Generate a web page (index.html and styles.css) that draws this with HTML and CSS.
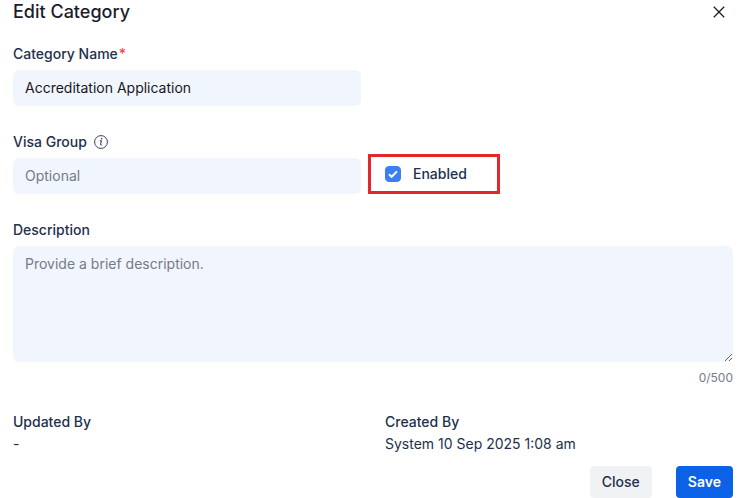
FILE: index.html
```html
<!DOCTYPE html>
<html lang="en">
<head>
    <meta charset="UTF-8">
    <meta name="viewport" content="width=device-width, initial-scale=1.0">
    <title>Edit Category</title>
    <link rel="stylesheet" href="styles.css">
</head>
<body>
    <form class="dialog">
        <div class="header">
            <h1>Edit Category</h1>
            <button type="button" class="close_icon" aria-label="Close dialog">
                <svg width="12" height="12" viewBox="0 0 12 12" fill="none" stroke="currentColor" stroke-width="1.3">
                    <path d="M0.8 0.8L11.2 11.2M11.2 0.8L0.8 11.2" />
                </svg>
            </button>
        </div>

        <div class="row">
            <div class="field">
                <label for="categoryName">Category Name<span class="required">*</span></label>
                <input id="categoryName" class="text_input" type="text" value="Accreditation Application">
            </div>
        </div>

        <div class="row">
            <div class="field">
                <label for="visaGroup">Visa Group
                    <svg class="info" width="14" height="14" viewBox="0 0 14 14" fill="none" stroke="currentColor">
                        <circle cx="7" cy="7" r="6.4" stroke-width="0.9" />
                        <path d="M5.8 5.9L7.4 5.7L6.5 9.6Q6.4 10.4 7.8 9.9" stroke-width="1" />
                        <circle cx="7.6" cy="3.8" r="0.8" fill="currentColor" stroke="none" />
                    </svg>
                </label>
                <input id="visaGroup" class="text_input" type="text" placeholder="Optional">
            </div>
            <label class="enabled">
                <input type="checkbox" class="checkbox" checked>
                Enabled
            </label>
        </div>

        <div class="field">
            <label for="description">Description</label>
            <textarea id="description" maxlength="500" placeholder="Provide a brief description."></textarea>
            <span class="counter">0/500</span>
        </div>

        <dl class="row">
            <div>
                <dt>Updated By</dt>
                <dd>-</dd>
            </div>
            <div>
                <dt>Created By</dt>
                <dd>System 10 Sep 2025 1:08 am</dd>
            </div>
        </dl>

        <div class="footer">
            <button type="button" class="btn">Close</button>
            <button type="submit" class="btn primary">Save</button>
        </div>
    </form>
</body>
</html>
```

FILE: styles.css
```css
* {
    margin: 0;
    padding: 0;
    box-sizing: border-box;
}
body {
    font-family: Inter, "Liberation Sans", sans-serif;
    font-size: 14px;
    line-height: 20px;
    color: #23304d;
    background: #fff;
}
input, textarea, button {
    font: inherit;
    color: inherit;
}
.dialog {
    display: flex;
    flex-direction: column;
    padding: 0 14px 0 13px;
}
.header {
    display: flex;
    align-items: center;
    justify-content: space-between;
    margin-bottom: 20px;
}
h1 {
    font-weight: 500;
    font-size: 18px;
    line-height: 24px;
    color: #1b1d2e;
}
.close_icon {
    display: flex;
    align-items: center;
    justify-content: center;
    width: 28px;
    height: 24px;
    color: #1b1d2e;
    background: none;
    border: none;
}
.row {
    display: grid;
    grid-template-columns: 1fr 1fr;
    column-gap: 24px;
    margin-bottom: 26px;
}
.field {
    display: flex;
    flex-direction: column;
}
label, dt {
    font-weight: 500;
}
.field label {
    display: flex;
    align-items: center;
    margin-bottom: 6px;
}
.required {
    margin-left: 1px;
    color: #f5474b;
}
.info {
    margin-left: 7px;
}
.text_input, textarea {
    width: 100%;
    background: #f1f5fe;
    border: none;
    border-radius: 6px;
}
.text_input {
    height: 36px;
    padding: 0 12px 2px;
    color: #17181c;
}
textarea {
    display: block;
    height: 116px;
    padding: 8px 12px;
    resize: vertical;
}
::placeholder {
    color: #757b88;
    opacity: 1;
}
.enabled {
    display: flex;
    align-items: center;
    align-self: end;
    justify-self: start;
    gap: 12px;
    height: 40px;
    margin-left: -17px;
    padding: 0 30px 0 14px;
    border: 3px solid #e3282c;
}
.checkbox {
    appearance: none;
    width: 16px;
    height: 16px;
    border: 1px solid #a5adbd;
    border-radius: 4px;
}
.checkbox:checked {
    border-color: #3b7ff5;
    background: #3b7ff5 url("data:image/svg+xml,%3Csvg xmlns='http://www.w3.org/2000/svg' viewBox='0 0 14 14' fill='none' stroke='white' stroke-width='2'%3E%3Cpath d='M3 7.2L5.7 9.8L11 4.4'/%3E%3C/svg%3E") center / 14px no-repeat;
}
.counter {
    align-self: flex-end;
    margin: 6px 0 24px;
    font-size: 12px;
    color: #757b88;
}
dl.row {
    margin-bottom: 12px;
}
dd {
    margin-top: 2px;
}
.footer {
    display: flex;
    justify-content: flex-end;
    gap: 24px;
}
.btn {
    height: 32px;
    padding: 0 12px;
    font-weight: 500;
    background: #f1f2f4;
    border: none;
    border-radius: 4px;
}
.btn.primary {
    font-weight: 600;
    color: #fff;
    background: #0b62e6;
}
```
